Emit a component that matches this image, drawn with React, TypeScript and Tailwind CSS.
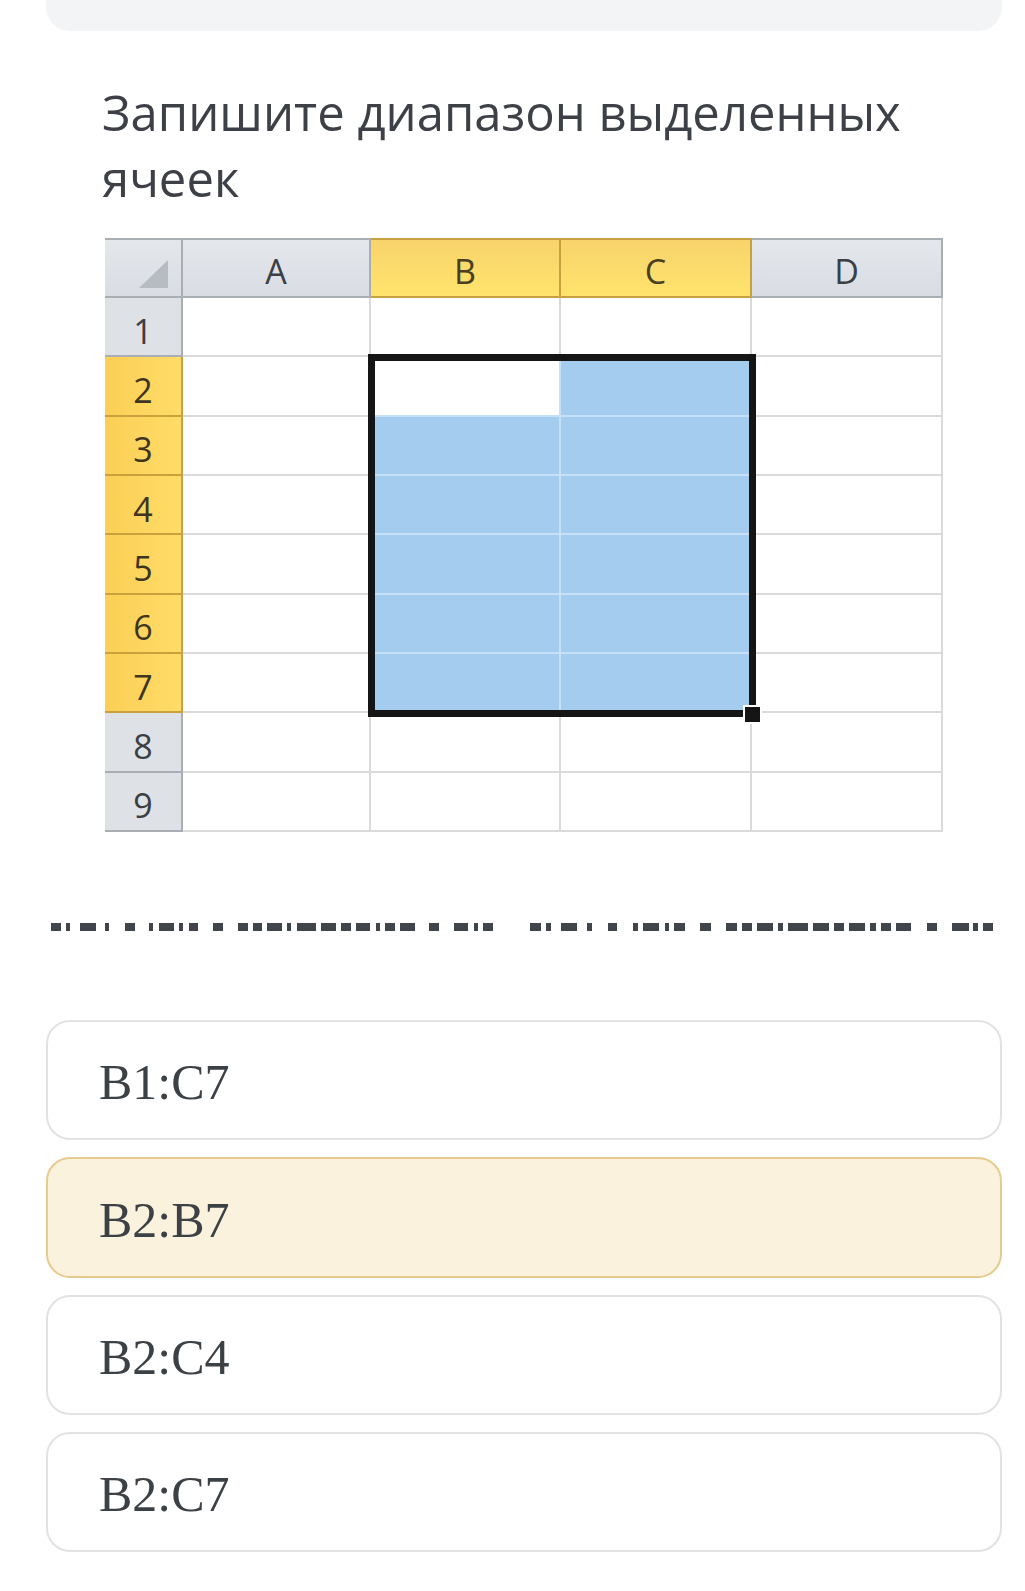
import React from "react";

const cols = ["A", "B", "C", "D"];
const rows = [1, 2, 3, 4, 5, 6, 7, 8, 9];

const g1: [number, number][] = [
  [51, 10], [66, 4], [80, 16], [105, 4], [125, 10], [149, 4], [159, 15], [179, 4], [189, 9],
  [213, 10], [238, 10], [253, 9], [267, 15], [287, 4], [297, 19], [321, 15], [341, 10], [356, 14],
  [376, 4], [385, 10], [400, 15], [429, 10], [454, 14], [474, 4], [483, 10],
];
const g2: [number, number][] = [
  [530, 11], [546, 5], [561, 16], [587, 5], [608, 9], [633, 5], [643, 16], [665, 4], [674, 11],
  [700, 11], [726, 11], [742, 10], [757, 16], [778, 5], [788, 20], [813, 16], [834, 10], [849, 16],
  [870, 6], [881, 10], [896, 15], [927, 10], [952, 17], [973, 5], [983, 10],
];

function HeaderCell({ label, selected }: { label: string; selected: boolean }) {
  return (
    <div
      className={
        selected
          ? "flex items-center justify-center pt-[7px] bg-linear-to-b from-[#f8d36c] to-[#ffe46c] border-t-2 border-r-2 border-b-2 border-[#c6a13e] text-[34px] text-[#4a3f20]"
          : "flex items-center justify-center pt-[7px] bg-linear-to-b from-[#e4e7ec] to-[#d9dde3] border-t-2 border-r-2 border-b-2 border-[#a9aeb5] text-[34px] text-[#3b3e42]"
      }
    >
      {label}
    </div>
  );
}

function RowHeader({ n }: { n: number }) {
  const sel = n >= 2 && n <= 7;
  return (
    <div
      className={
        sel
          ? "flex items-center justify-center pt-[9px] bg-linear-to-r from-[#fbcf55] to-[#ffdc68] border-r-2 border-b-2 border-[#c9a23d] text-[34px] text-[#3d3520]"
          : "flex items-center justify-center pt-[9px] bg-[#dee1e6] border-r-2 border-b-2 border-[#a9aeb5] text-[34px] text-[#3b3e42]"
      }
    >
      {n}
    </div>
  );
}

function Cell({ r, c }: { r: number; c: string }) {
  const inSel = r >= 2 && r <= 7 && (c === "B" || c === "C");
  const active = r === 2 && c === "B";
  let cls = "border-r-2 border-b-2 border-[#dadada] bg-white";
  if (active) cls = "border-r-2 border-b-2 border-[#c6e0f7] bg-white";
  else if (inSel) cls = "border-r-2 border-b-2 border-[#c6e0f7] bg-[#a3ccef]";
  return <div className={cls} />;
}

function Sheet() {
  return (
    <div className="relative ml-[105px] mt-[27px] w-[838px] h-[594px] font-['Open_Sans',sans-serif]">
      <div className="grid h-full w-full grid-cols-[78px_188px_190px_191px_191px] grid-rows-[60px_repeat(9,minmax(0,1fr))]">
        <div className="relative bg-linear-to-b from-[#e4e7ec] to-[#d9dde3] border-t-2 border-r-2 border-b-2 border-[#a9aeb5]">
          <svg className="absolute left-[30px] top-[19px]" width="34" height="30" viewBox="0 0 34 30">
            <polygon points="33,1 33,29 4,29" fill="#b7bcc3" />
          </svg>
        </div>
        {cols.map((c) => (
          <HeaderCell key={c} label={c} selected={c === "B" || c === "C"} />
        ))}
        {rows.map((r) => (
          <React.Fragment key={r}>
            <RowHeader n={r} />
            {cols.map((c) => (
              <Cell key={c} r={r} c={c} />
            ))}
          </React.Fragment>
        ))}
      </div>
      <div className="absolute left-[263px] top-[116px] w-[388px] h-[363px] border-[7px] border-[#151515]" />
      <div className="absolute left-[638px] top-[467px] w-[19px] h-[19px] bg-[#151515] border-2 border-white" />
    </div>
  );
}

function Option({ text, selected }: { text: string; selected?: boolean }) {
  return (
    <div
      className={
        selected
          ? "flex items-center h-[121px] w-[956px] ml-[46px] rounded-[24px] border-2 border-[#e6ca8e] bg-[#fbf2de] pl-[51px]"
          : "flex items-center h-[120px] w-[956px] ml-[46px] rounded-[24px] border-2 border-[#e0e2e4] bg-white pl-[51px]"
      }
    >
      <span className="font-['Liberation_Serif',serif] text-[50px] leading-none text-[#3c4146] pt-[4px]">{text}</span>
    </div>
  );
}

export default function App() {
  return (
    <div className="w-[1025px] min-h-[1591px] bg-white pb-[39px]">
      <div className="ml-[46px] w-[956px] h-[31px] rounded-b-[24px] bg-[#f3f4f6]" />
      <div className="ml-[102px] mt-[48px] w-[880px] font-['Open_Sans',sans-serif] text-[49px] leading-[66px] text-[#3d4147]">
        Запишите диапазон выделенных ячеек
      </div>
      <Sheet />
      <svg className="mt-[91px] block" width="1025" height="8" viewBox="0 0 1025 8">
        {g1.concat(g2).map(([x, w], i) => (
          <rect key={i} x={x} y={0} width={w} height={8} fill="#40454c" />
        ))}
      </svg>
      <div className="mt-[89px] flex flex-col gap-[17px]">
        <Option text="B1:C7" />
        <Option text="B2:B7" selected />
        <Option text="B2:C4" />
        <Option text="B2:C7" />
      </div>
    </div>
  );
}
